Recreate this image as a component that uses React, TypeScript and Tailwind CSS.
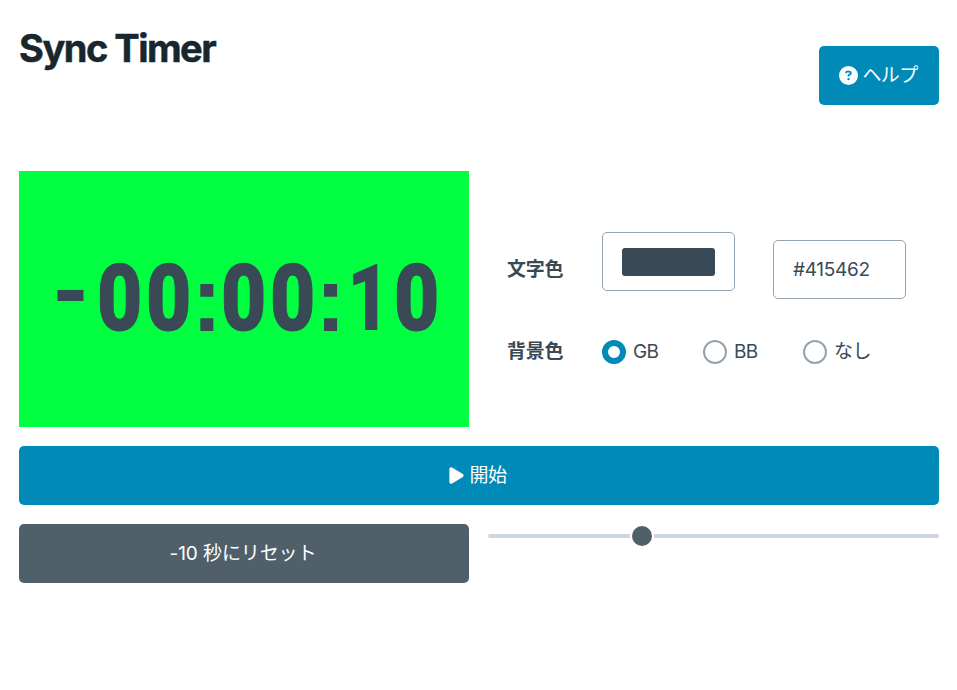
import { FaCircleQuestion, FaPlay } from "react-icons/fa6";

const zero = "font-['Roboto'] scale-x-[0.85] [-webkit-text-stroke:1px_#394a56] text-[92px]";
const colon = "font-['Liberation_Sans'] text-[92px] pl-px";

const glyphs = [
  { c: "-", w: "w-[42px]", cls: "relative -left-[4px] -top-[11px] font-['Liberation_Sans'] text-[93px] scale-x-[1.1]" },
  { c: "0", w: "w-[49.4px]", cls: zero },
  { c: "0", w: "w-[49.4px]", cls: zero },
  { c: ":", w: "w-[25px]", cls: colon },
  { c: "0", w: "w-[49.4px]", cls: zero },
  { c: "0", w: "w-[49.4px]", cls: zero },
  { c: ":", w: "w-[25px]", cls: colon },
  { c: "1", w: "w-[49.4px]", cls: "pl-[4px] font-['Roboto'] scale-x-[0.79] text-[93px]" },
  { c: "0", w: "w-[49.4px]", cls: zero },
];

function Radio({ label, checked, className }: { label: string; checked?: boolean; className: string }) {
  return (
    <label className={`flex items-center ${className}`}>
      <span className={`mr-[7px] h-6 w-6 shrink-0 rounded-full ${checked ? "border-[6.5px] border-[#008ab7]" : "border-2 border-[#93a3b0]"}`} />
      <span className="whitespace-nowrap tracking-[-0.6px]">{label}</span>
    </label>
  );
}

export default function App() {
  return (
    <main className="h-[690px] w-[957px] bg-white pl-[19px] pr-[18px] font-['Inter','Noto_Sans_CJK_JP',sans-serif] text-[19px] leading-[28px] text-[#394a56]">
      <header className="flex h-[171px] items-start justify-between">
        <h1 className="mt-[23px] text-[38px] font-bold leading-[50px] tracking-[-1.5px] text-[#18262d] [-webkit-text-stroke:0.5px_#18262d]">Sync Timer</h1>
        <button className="mt-[46px] flex h-[59px] w-[120px] items-center justify-center gap-[5px] rounded-[5px] bg-[#008ab7] pr-[2px] text-white">
          <FaCircleQuestion className="h-[19px] w-[19px]" />
          <span className="whitespace-nowrap tracking-[-0.7px]">ヘルプ</span>
        </button>
      </header>
      <section className="flex h-[256px] gap-[38px]">
        <div className="flex w-[450px] items-center bg-[#00ff40] pl-[34px]">
          {glyphs.map((g, i) => (
            <span key={i} className={`flex shrink-0 justify-center ${g.w}`}>
              <span className={`font-black leading-[100px] ${g.cls}`}>{g.c}</span>
            </span>
          ))}
        </div>
        <div className="w-[432px] pt-[61px]">
          <div className="flex">
            <b className="w-[95px] pt-[24px] tracking-[-0.2px]">文字色</b>
            <div className="h-[59px] w-[133px] rounded-[5px] border border-[#93a3b0] px-[19px] py-[15px]">
              <div className="h-[28px] w-[93px] rounded-[3px] bg-[#394a56]" />
            </div>
            <div className="ml-[38px] mt-2 flex h-[59px] w-[133px] items-center rounded-[5px] border border-[#93a3b0] pl-[19px] tracking-[-0.3px]">#415462</div>
          </div>
          <div className="mt-[38px] flex h-[28px] items-center">
            <b className="w-[95px] tracking-[-0.2px] pt-px">背景色</b>
            <Radio label="GB" checked className="w-[101px] pt-px" />
            <Radio label="BB" className="w-[100px] pt-px" />
            <Radio label="なし" className="pt-px" />
          </div>
        </div>
      </section>
      <button className="mt-[19px] flex h-[59px] w-full items-center justify-center gap-[5px] rounded-[5px] bg-[#008ab7] pr-[2px] text-white">
        <FaPlay className="h-[19px] w-[15px]" />
        <span className="tracking-[-0.5px]">開始</span>
      </button>
      <div className="mt-[19px] flex gap-[19px]">
        <button className="h-[59px] w-[450px] rounded-[5px] bg-[#4f606b] pr-[2px] tracking-[-0.1px] text-white">-10 秒にリセット</button>
        <div className="flex h-6 flex-1 items-center">
          <div className="h-1 w-[142px] rounded-l-full bg-[#cdd6de]" />
          <div className="mx-[2px] h-5 w-5 rounded-full bg-[#4f606b]" />
          <div className="h-1 flex-1 rounded-r-full bg-[#cdd6de]" />
        </div>
      </div>
    </main>
  );
}
